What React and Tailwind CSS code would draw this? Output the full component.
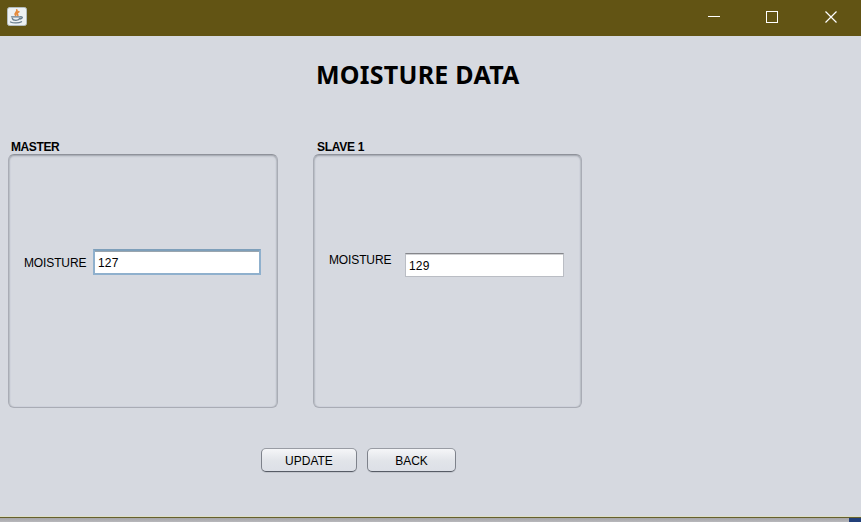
import React from "react";

const TitleBar = () => (
  <header className="flex h-9 shrink-0 items-start justify-between bg-[#625414]">
    <svg className="ml-[7px] mt-[7px]" width="20" height="19" viewBox="0 0 20 19" fill="none" strokeLinecap="round">
      <rect x="0.5" y="0.5" width="19" height="18" rx="2" fill="#edf1f3" stroke="#b3bcbd" />
      <path d="M9.800 3c1.400 1.700-3 2.700-1.200 5.200M11.800 4.800c-2 1-1.900 2-1 3.400" stroke="#e58a3c" strokeWidth="1.800" />
      <path d="M4.500 9.800h8.700M5.300 11.300c.3 1.500 1.200 2 3.700 2s3.200-.6 3.800-2M13.500 9.800c2.800-.3 2.200 2-.5 2.200" stroke="#687d8d" strokeWidth="1.300" />
      <path d="M3.500 15c2.800 1.400 8.500 1.200 11-.2" stroke="#687d8d" strokeWidth="1.300" />
    </svg>
    <svg width="171" height="36" viewBox="0 0 171 36" fill="none" stroke="#fff" shapeRendering="crispEdges">
      <path d="M18 16.500H30" />
      <rect x="76.500" y="11.500" width="11" height="11" />
      <path d="M135.500 11.500l11 11M146.500 11.500l-11 11" strokeWidth="1.200" shapeRendering="auto" />
    </svg>
  </header>
);

const Panel = ({ title, className, titleClass, children }) => (
  <section className={className}>
    <h2 className={`h-[14px] text-[12px] font-bold leading-[14px] ${titleClass}`}>{title}</h2>
    <div className="flex h-[254px] items-start rounded-[6px] border border-[#a9acb5] border-t-[#8f929a] bg-[#d6d9e0] shadow-[inset_0_1px_2px_rgba(80,84,98,0.4),inset_1px_0_1px_rgba(80,84,98,0.1),inset_-1px_0_1px_rgba(80,84,98,0.1)]">
      {children}
    </div>
  </section>
);

const Button = ({ className, children }) => (
  <button className={`h-6 rounded-[5px] border border-[#7e828b] border-t-[#999ca4] border-b-[#575c66] bg-linear-to-b from-[#f5f6f8] via-[#e1e4e9] via-55% to-[#dde0e7] pt-px text-[12px] leading-[14px] shadow-[0_1px_0_#c3c6cd] ${className}`}>
    {children}
  </button>
);

export default function App() {
  return (
    <div className="flex h-[522px] w-[861px] flex-col overflow-hidden bg-[#d6d9e0] font-['Liberation_Sans',Arial,sans-serif] text-black">
      <TitleBar />
      <main className="flex h-[480px] flex-col">
        <h1 className="ml-[316px] mt-[22px] h-8 whitespace-nowrap font-['Noto_Sans',sans-serif] text-[25px] font-bold leading-8 tracking-[0.25px]">
          MOISTURE DATA
        </h1>
        <div className="ml-2 mt-[50px] flex gap-[35px]">
          <Panel title="MASTER" className="w-[270px]" titleClass="pl-[3px] tracking-[-0.4px]">
            <label className="ml-[15px] mt-[101px] w-[69px] text-[12px] leading-[14px] tracking-[-0.13px]">MOISTURE</label>
            <input
              defaultValue="127"
              className="mt-[94px] h-[26px] w-[168px] border-2 border-[#8fb0cd] border-t-[#7e9fba] bg-white pl-[3px] pt-px text-[12px] tracking-[0.2px] shadow-[inset_0_1px_0_#9aa5ae] outline-none"
            />
          </Panel>
          <Panel title="SLAVE 1" className="w-[269px]" titleClass="pl-1 tracking-[-0.3px]">
            <label className="ml-[15px] mt-[98px] w-[76px] text-[12px] leading-[14px] tracking-[-0.13px]">MOISTURE</label>
            <input
              defaultValue="129"
              className="mt-[98px] h-6 w-[159px] border border-[#babdc4] border-t-[#85868b] bg-white pl-[3px] pt-px text-[12px] tracking-[0.2px] shadow-[inset_0_1px_0_#d0d1d4] outline-none"
            />
          </Panel>
        </div>
        <div className="ml-[261px] mt-10 flex gap-2.5">
          <Button className="w-24">UPDATE</Button>
          <Button className="w-[89px]">BACK</Button>
        </div>
      </main>
      <footer className="flex h-1.5 flex-col">
        <div className="h-px bg-[#dcdec9]" />
        <div className="h-px bg-[#66602c]" />
        <div className="flex h-1">
          <div className="flex-1 bg-linear-to-b from-[#a5a5a8] to-[#b8b8bc]" />
          <div className="w-3 bg-[#213f78]" />
        </div>
      </footer>
    </div>
  );
}
